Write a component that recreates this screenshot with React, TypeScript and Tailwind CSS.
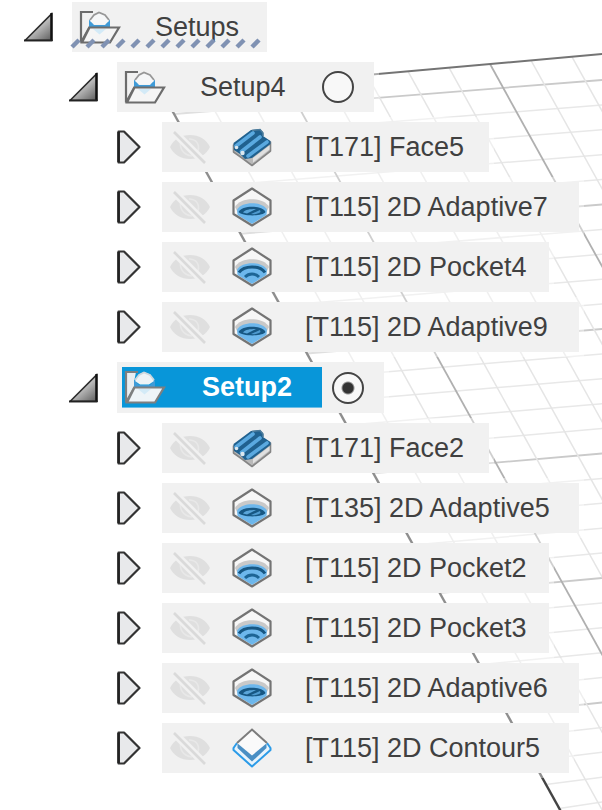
import * as React from 'react';
import clsx from 'clsx';

type OperationKind = 'face' | 'adaptive' | 'pocket' | 'contour';

interface Operation {
  name: string;
  kind: OperationKind;
}

interface Setup {
  name: string;
  operations: Operation[];
}

const SETUPS: Setup[] = [
  {
    name: 'Setup4',
    operations: [
      { name: '[T171] Face5', kind: 'face' },
      { name: '[T115] 2D Adaptive7', kind: 'adaptive' },
      { name: '[T115] 2D Pocket4', kind: 'pocket' },
      { name: '[T115] 2D Adaptive9', kind: 'adaptive' },
    ],
  },
  {
    name: 'Setup2',
    operations: [
      { name: '[T171] Face2', kind: 'face' },
      { name: '[T135] 2D Adaptive5', kind: 'adaptive' },
      { name: '[T115] 2D Pocket2', kind: 'pocket' },
      { name: '[T115] 2D Pocket3', kind: 'pocket' },
      { name: '[T115] 2D Adaptive6', kind: 'adaptive' },
      { name: '[T115] 2D Contour5', kind: 'contour' },
    ],
  },
];

const ROW_WIDTH: Record<OperationKind, string> = {
  face: 'w-[327px]',
  adaptive: 'w-[417px]',
  pocket: 'w-[387px]',
  contour: 'w-[407px]',
};

const ROW = 'flex items-center min-h-[50px] bg-[#f1f1f1] shadow-[0_0_0_5px_rgba(255,255,255,0.4)]';

// Work plane of the viewport, seen in perspective
function ViewportGrid() {
  const across = Array.from({ length: 36 }, (_, k) => k);
  const along = Array.from({ length: 40 }, (_, j) => j + 1);

  return (
    <svg className="absolute inset-0 w-full h-full" aria-hidden="true" fill="none">
      {across.map((k) => {
        const y1 = 114 + 23.95 * k;
        const y2 = 80 + 24.9 * k;
        const x1 = 173 + 0.5544 * (y1 - 112);
        const slope = (y2 - y1) / (602 - x1);
        return (
          <line
            key={k}
            x1={x1}
            y1={y1}
            x2={2000}
            y2={y1 + slope * (2000 - x1)}
            stroke={k % 5 === 0 ? '#cacaca' : '#e8e8e8'}
            strokeWidth={k % 5 === 0 ? 1.8 : 1.5}
          />
        );
      })}
      {along.map((j) => {
        const x = 162 + 41 * j;
        const y = 93 - 0.0886 * (x - 163);
        return (
          <line
            key={j}
            x1={x}
            y1={y}
            x2={x + 0.554 * 1500}
            y2={y + 1500}
            stroke={j % 5 === 3 ? '#b0b0b0' : '#e5e5e5'}
            strokeWidth={j % 5 === 3 ? 1.8 : 1.5}
          />
        );
      })}
      <path d="M163 93L2000 -70" stroke="#747474" strokeWidth="2" />
      <path d="M163 94L995 1594" stroke="#444" strokeWidth="2.4" />
    </svg>
  );
}

function Toggle({ open, label, onClick }: { open: boolean; label: string; onClick: () => void }) {
  return (
    <button
      type="button"
      aria-expanded={open}
      aria-label={label}
      onClick={onClick}
      className="w-[38px] h-[50px] mr-[14px] shrink-0 flex items-center justify-center"
    >
      {open ? (
        <svg width="30" height="30" viewBox="0 0 30 30">
          <path d="M1 28.500L27.500 2V28.500Z" fill="url(#open-arrow)" stroke="#2b2b2b" strokeWidth="1.600" />
          <path d="M27.500 1V29" stroke="#111" strokeWidth="2.400" />
          <path d="M0 28.400H28.500" stroke="#222" strokeWidth="1.800" />
        </svg>
      ) : (
        <svg width="24" height="34" viewBox="0 0 24 34">
          <path d="M1.500 1.500H7L22.500 17L7 32.500H1.500Z" fill="#e8e9eb" stroke="#333" strokeWidth="2.200" strokeLinejoin="round" />
          <path d="M1.600 2V32" stroke="#222" strokeWidth="2.600" />
        </svg>
      )}
    </button>
  );
}

function FolderIcon({ selected = false }: { selected?: boolean }) {
  const stroke = selected ? '#7d7f80' : '#6c6c6c';
  return (
    <svg width="42" height="34" viewBox="0 0 42 34" fill="none" className="shrink-0">
      {selected && <path d="M2 2H12L10 12L11 17L2 32Z" fill="#e9eef1" />}
      <path d="M14 2H2V32.500L10.500 17" stroke={stroke} strokeWidth="2.200" />
      <path d="M10 9.500L15 15H26L31 9.500V17H10Z" fill="#3f9bd8" />
      <path d="M11 11L15 4.500L20 2L26 4.500L30 11L25 14.500H16Z" fill={selected ? '#eef3f6' : '#f6f7f8'} />
      <path d="M11 10L15 5L20 2.500L26 5L30 10" stroke={selected ? '#cdd7dd' : '#979797'} strokeWidth="1.800" />
      <path d="M10.500 17.500H40L31 32.500H3Z" fill={selected ? '#eef4f8' : '#f5f5f5'} stroke={stroke} strokeWidth="2.200" />
      <path d="M14 19H27L20.500 24.500Z" fill="#d3eaf7" />
    </svg>
  );
}

function HiddenEyeIcon() {
  return (
    <svg width="40" height="34" viewBox="0 0 40 34" fill="none">
      <path d="M0 17C4 9 11 5 20 5S36 9 40 17C36 25 29 29 20 29S4 25 0 17Z" fill="#dfdfdf" />
      <path d="M11 11C9 18 13 25 22 26" stroke="#e8e8e8" strokeWidth="1.600" />
      <path d="M19 9C26 9 30 14 28 21" stroke="#e8e8e8" strokeWidth="1.600" />
      <path d="M4 2L35 33" stroke="#f1f1f1" strokeWidth="8" />
      <path d="M4 2L35 33" stroke="#dadada" strokeWidth="2.600" />
    </svg>
  );
}

function PocketFloor() {
  return (
    <>
      <path d="M20 1.500L38.500 13.500V27L20 38.500L1.500 27V13.500Z" fill="#f7f7f7" />
      <path d="M3 20C8 9.500 32 9.500 37 20L34 26H6Z" fill="#c9c9c9" />
      <path d="M5 22.500C10 14 30 14 35 22.500L34.500 28L20 37L5.500 28Z" fill="#6db7ec" />
    </>
  );
}

function HexFrame() {
  return (
    <path d="M20 1.500L38.500 13.500V27L20 38.500L1.500 27V13.500Z" stroke="#747474" strokeWidth="2.200" strokeLinejoin="round" />
  );
}

function OperationIcon({ kind }: { kind: OperationKind }) {
  return (
    <svg width="40" height="40" viewBox="0 0 40 40" fill="none" className="shrink-0">
      {kind === 'face' && (
        <>
          <path d="M1.500 18V25L10 31L20 38.500L38.500 24V15Z" fill="#b9b9b9" stroke="#858585" strokeWidth="1.600" strokeLinejoin="round" />
          <path d="M21 31L37.500 18.500V22.500L21 35.500Z" fill="#e0e0e0" />
          <path d="M1.500 16L19 3L28 2L31 5V9L38.500 14V17L20 31L13 32L8 27L2 23Z" fill="#20618f" />
          <path d="M4 19L21 6M9.500 24.500L28 10M16 29L35 15" stroke="#5aa9e0" strokeWidth="3.600" strokeLinecap="round" />
          <path d="M20 3.500L28 2.500L31 6V9" stroke="#4d7c9c" strokeWidth="1.600" />
          <circle cx="4.500" cy="20.500" r="1.800" fill="#dce8f0" />
          <circle cx="10.500" cy="26" r="2.200" fill="#dce8f0" />
        </>
      )}
      {kind === 'adaptive' && (
        <>
          <PocketFloor />
          <path d="M6.500 25C10 18 30 18 33.500 25C31 29.500 10 29.500 6.500 25Z" fill="#175783" />
          <path d="M11 25.500C13 22.500 18 22 24 22L15 26.500Z" fill="#5ba6da" />
          <path d="M19 27L28 23L28.500 25C26 27 23 27.500 19 27Z" fill="#4f9acf" />
          <HexFrame />
        </>
      )}
      {kind === 'pocket' && (
        <>
          <PocketFloor />
          <path d="M7 25.500C12 18 28 18 33 25.500" stroke="#175783" strokeWidth="3" />
          <path d="M13 30C17 26 23 26 27 30" stroke="#1d6596" strokeWidth="3" />
          <HexFrame />
        </>
      )}
      {kind === 'contour' && (
        <>
          <path d="M5 15L1.500 20V22L20 38.500L38.500 22V20L35 15" fill="#e9f4fc" stroke="#2b9be8" strokeWidth="2" strokeLinejoin="round" />
          <path d="M5.500 14.500L20 26L34.500 14.500V20L20 33.500L5.500 20Z" fill="#4a8fc4" />
          <path d="M20 1.500L35 15L20 27.500L5 15Z" fill="#fafafa" />
          <path d="M5 15L20 1.500L35 15" stroke="#7c7c7c" strokeWidth="2" />
        </>
      )}
    </svg>
  );
}

function OperationRow({ operation }: { operation: Operation }) {
  const [open, setOpen] = React.useState(false);

  return (
    <li className="flex items-center">
      <Toggle open={open} label={`Expand ${operation.name}`} onClick={() => setOpen(!open)} />
      <div className={clsx(ROW, 'pl-2 shrink-0', ROW_WIDTH[operation.kind])}>
        <button type="button" aria-label={`Show ${operation.name}`} className="mr-[22px] shrink-0">
          <HiddenEyeIcon />
        </button>
        <OperationIcon kind={operation.kind} />
        <span className="ml-[33px] whitespace-nowrap">{operation.name}</span>
      </div>
    </li>
  );
}

interface SetupNodeProps {
  setup: Setup;
  active: boolean;
  onActivate: () => void;
}

function SetupNode({ setup, active, onActivate }: SetupNodeProps) {
  const [open, setOpen] = React.useState(true);
  const id = `activate-${setup.name}`;

  return (
    <li className="flex flex-col gap-[10px]">
      <div className="flex items-center">
        <Toggle open={open} label={`Toggle ${setup.name}`} onClick={() => setOpen(!open)} />
        <div className={clsx(ROW, 'gap-[10px] pr-5')}>
          <label
            htmlFor={id}
            className={clsx(
              'flex items-center',
              active
                ? 'w-[200px] h-[41px] my-[5px] ml-[5px] pl-[2px] gap-9 bg-[#0896d9] border-b border-[#6bbde6] text-white font-bold'
                : 'w-[195px] pl-[7px] gap-[34px]'
            )}
          >
            <FolderIcon selected={active} />
            {setup.name}
          </label>
          <input
            id={id}
            type="radio"
            name="active-setup"
            checked={active}
            onChange={onActivate}
            className="appearance-none size-8 rounded-full border-2 border-[#444] bg-[#f8f8f8] checked:bg-[radial-gradient(circle,#333_0_5px,#f8f8f8_7px)]"
          />
        </div>
      </div>
      {open && (
        <ul className="flex flex-col gap-[10px] pl-[45px]">
          {setup.operations.map((operation) => (
            <OperationRow key={operation.name} operation={operation} />
          ))}
        </ul>
      )}
    </li>
  );
}

export default function App() {
  const [open, setOpen] = React.useState(true);
  const [activeSetup, setActiveSetup] = React.useState('Setup2');

  return (
    <main className="relative min-h-screen overflow-hidden bg-white font-['Liberation_Sans',Arial,sans-serif] text-[27px] leading-8 text-[#404040]">
      <ViewportGrid />
      <svg width="0" height="0" className="absolute" aria-hidden="true">
        <defs>
          <linearGradient id="open-arrow" x1="0.2" y1="0" x2="1" y2="1">
            <stop offset="0.3" stopColor="#d8d8d8" />
            <stop offset="1" stopColor="#5c5c5c" />
          </linearGradient>
        </defs>
      </svg>

      <nav aria-label="Setups" className="relative flex flex-col gap-[10px] pt-[2px] pl-5">
        <div className="flex items-center">
          <Toggle open={open} label="Toggle Setups" onClick={() => setOpen(!open)} />
          <div className={clsx(ROW, 'relative w-[195px] pl-[7px] gap-[34px]')}>
            <FolderIcon />
            <span>Setups</span>
            {/* Out-of-date hatching */}
            <svg width="195" height="14" viewBox="0 0 195 14" className="absolute -left-[2px] bottom-[2px]" aria-hidden="true">
              {Array.from({ length: 13 }, (_, i) => (
                <path key={i} d={`M${i * 15 + 2} 11L${i * 15 + 9} 4`} stroke="#8092b3" strokeWidth="4.500" />
              ))}
            </svg>
          </div>
        </div>
        {open && (
          <ul className="flex flex-col gap-[10px] pl-[45px]">
            {SETUPS.map((setup) => (
              <SetupNode
                key={setup.name}
                setup={setup}
                active={setup.name === activeSetup}
                onActivate={() => setActiveSetup(setup.name)}
              />
            ))}
          </ul>
        )}
      </nav>
    </main>
  );
}
